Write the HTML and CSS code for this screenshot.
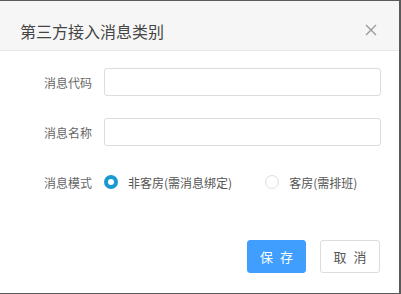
FILE: index.html
```html
<!DOCTYPE html>
<html lang="zh-CN">
<head>
<meta charset="utf-8">
<link rel="stylesheet" href="styles.css">
</head>
<body>
<div class="dialog">
  <div class="header">
    <span class="title">第三方接入消息类别</span>
    <svg class="close" width="12" height="12" viewBox="0 0 12 12"><path d="M1 1L11 11M11 1L1 11" stroke="#9a9a9a" stroke-width="1.4" fill="none"/></svg>
  </div>
  <div class="body">
    <div class="row">
      <label class="label">消息代码</label>
      <input class="input" type="text">
    </div>
    <div class="row">
      <label class="label">消息名称</label>
      <input class="input" type="text">
    </div>
    <div class="row">
      <label class="label">消息模式</label>
      <div class="radios">
        <span class="radio-item"><span class="radio checked"></span><span class="rtext">非客房(需消息绑定)</span></span>
        <span class="radio-item second"><span class="radio"></span><span class="rtext">客房(需排班)</span></span>
      </div>
    </div>
  </div>
  <div class="footer">
    <button class="btn primary">保 存</button>
    <button class="btn">取 消</button>
  </div>
</div>
</body>
</html>
```
FILE: styles.css
```css
html, body {
  margin: 0;
  padding: 0;
}
body {
  background: #5a5a5a;
  width: 401px;
  height: 294px;
  overflow: hidden;
  font-family: "Noto Sans CJK SC", "Liberation Sans", sans-serif;
}
.dialog {
  margin-top: 1px;
  width: 399px;
  height: 292px;
  background: #fff;
  display: flex;
  flex-direction: column;
}
.header {
  height: 49px;
  background: #f6f6f6;
  border-bottom: 1px solid #e8e8e8;
  display: flex;
  align-items: center;
  justify-content: space-between;
  padding: 0 22px 0 20px;
}
.title {
  font-size: 16px;
  color: #444;
  margin-top: 10px;
}
.close {
  margin-top: 9px;
}
.body {
  padding-top: 17px;
  display: flex;
  flex-direction: column;
  gap: 22px;
}
.row {
  display: flex;
  align-items: center;
  height: 28px;
}
.label {
  width: 92px;
  text-align: right;
  font-size: 12px;
  color: #666;
  margin-right: 12px;
}
.input {
  box-sizing: border-box;
  width: 277px;
  height: 28px;
  border: 1px solid #dcdcdc;
  border-radius: 3px;
  margin: 0;
  padding: 0 8px;
  outline: none;
}
.radios {
  display: flex;
  align-items: center;
}
.radio-item {
  display: flex;
  align-items: center;
  font-size: 12px;
  color: #555;
}
.radio-item.second {
  margin-left: 33px;
}
.radio {
  box-sizing: border-box;
  width: 14px;
  height: 14px;
  border-radius: 50%;
  border: 1px solid #dedede;
  background: #fff;
  margin-right: 10px;
}
.radio.checked {
  border: 4.5px solid #1a99d2;
  background: #fff;
}
.footer {
  display: flex;
  justify-content: flex-end;
  gap: 14px;
  padding: 44px 19px 0 0;
}
.btn {
  height: 33px;
  width: 60px;
  border: 1px solid #dcdcdc;
  border-radius: 3px;
  background: #fff;
  color: #555;
  font-family: inherit;
  font-size: 13px;
  letter-spacing: 2px;
  padding: 0 0 0 2px;
}
.btn.primary {
  width: 59px;
  background: #409eff;
  border-color: #409eff;
  color: #fff;
}
```
